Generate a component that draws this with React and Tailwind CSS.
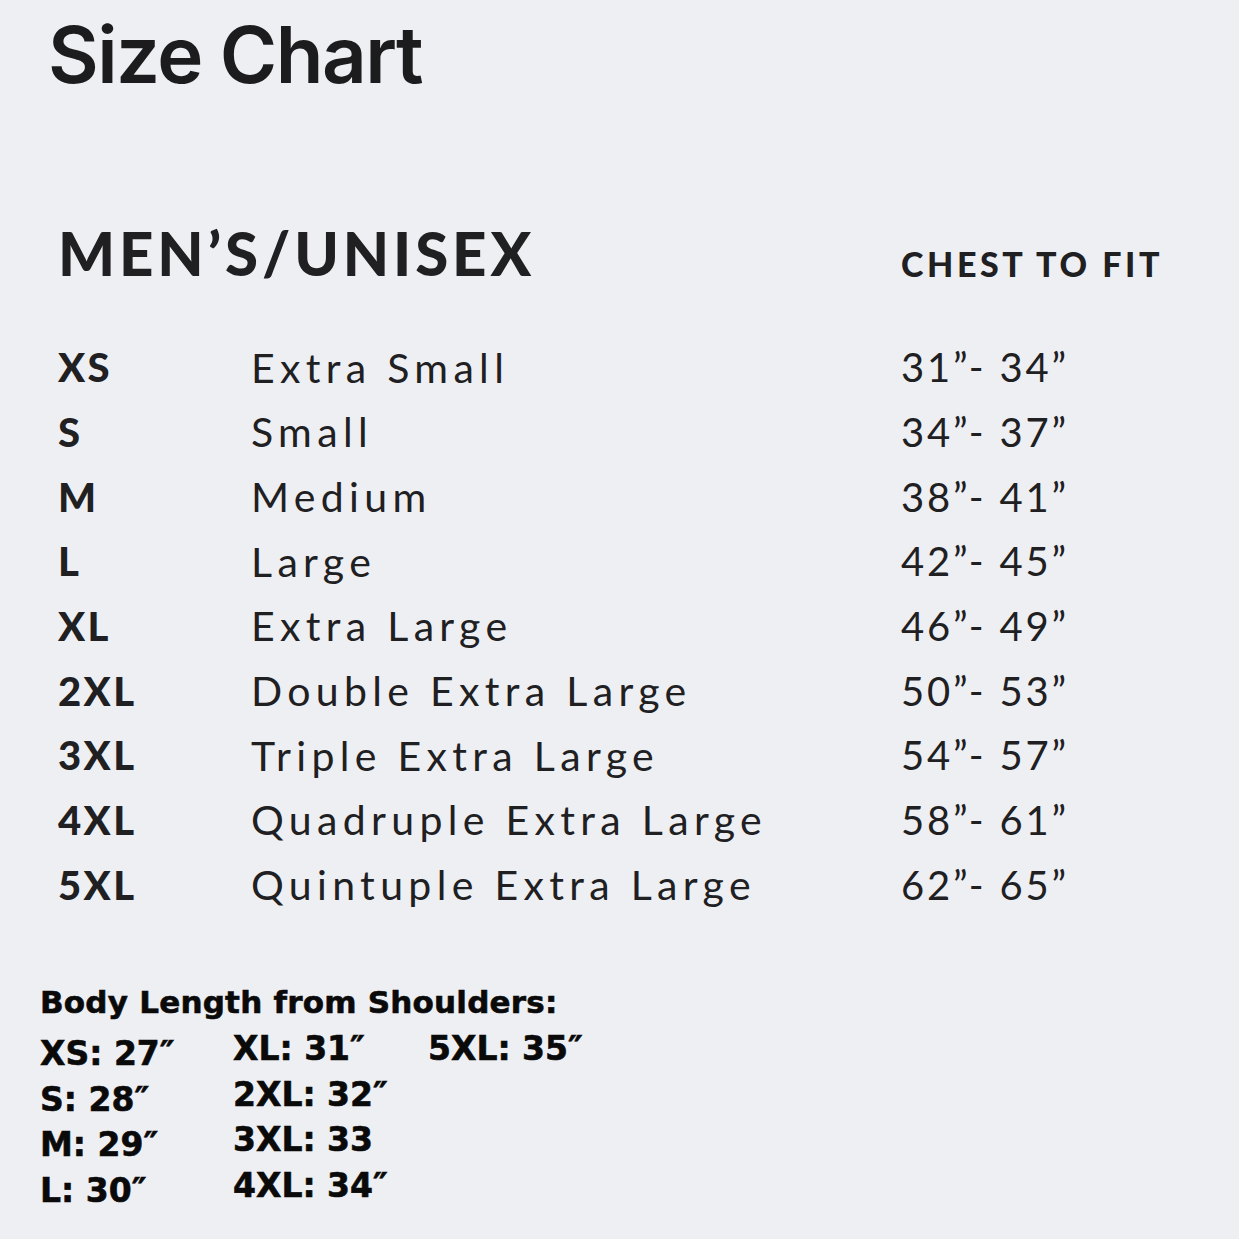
const rows = [
  ["XS", "Extra Small", "31”- 34”"],
  ["S", "Small", "34”- 37”"],
  ["M", "Medium", "38”- 41”"],
  ["L", "Large", "42”- 45”"],
  ["XL", "Extra Large", "46”- 49”"],
  ["2XL", "Double Extra Large", "50”- 53”"],
  ["3XL", "Triple Extra Large", "54”- 57”"],
  ["4XL", "Quadruple Extra Large", "58”- 61”"],
  ["5XL", "Quintuple Extra Large", "62”- 65”"],
];

const lengths = [
  ["XS: 27″", "S: 28″", "M: 29″", "L: 30″"],
  ["XL: 31″", "2XL: 32″", "3XL: 33", "4XL: 34″"],
  ["5XL: 35″"],
];

export default function App() {
  return (
    <div className="w-[1239px] h-[1239px] bg-[#eeeff3] text-[#1c1c1e] overflow-hidden">
      {/* Title */}
      <h1 className="pl-[48px] pt-[16px] text-[78px] leading-none font-semibold tracking-[-0.02em] font-['Inter',sans-serif]">
        Size Chart
      </h1>

      {/* Table */}
      <div className="pl-[58px] pr-[80px] pt-[129px] font-['Lato',sans-serif] text-[#202022]">
        <div className="flex items-end justify-between">
          <h2 className="text-[60px] leading-none font-black tracking-[0.065em]">MEN’S/UNISEX</h2>
          <span className="text-[34px] leading-none font-black tracking-[0.105em] -mr-[4px] mb-[2px]">CHEST TO FIT</span>
        </div>

        <div className="mt-[52px] flex flex-col">
          {rows.map(([size, name, chest]) => (
            <div key={size} className="flex h-[64.7px] items-center">
              <span className="w-[193px] text-[40px] font-black tracking-[0.06em]">{size}</span>
              <span className="w-[650px] text-[41px] tracking-[0.13em]">{name}</span>
              <span className="text-[40px] tracking-[0.07em]">{chest}</span>
            </div>
          ))}
        </div>
      </div>

      {/* Body length */}
      <div className="pl-[40px] pt-[70px] font-['DejaVu_Sans',sans-serif] font-bold text-[#0a0a0a] [-webkit-text-stroke:0.6px_#0a0a0a]">
        <p className="text-[31px] leading-none tracking-[0.007em]">Body Length from Shoulders:</p>
        <div className="flex mt-[8px]">
          {lengths.map((col, i) => (
            <div key={i} className={i === 0 ? "w-[193px] pt-[5px]" : "w-[195px]"}>
              {col.map((t) => (
                <div key={t} className="text-[33px] leading-[45.5px] tracking-[0em]">{t}</div>
              ))}
            </div>
          ))}
        </div>
      </div>
    </div>
  );
}
